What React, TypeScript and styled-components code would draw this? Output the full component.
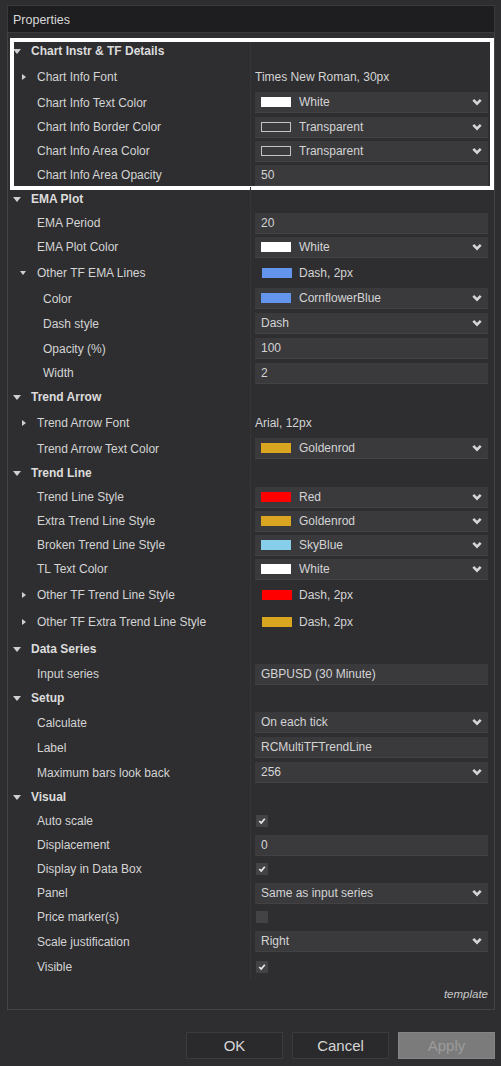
import React from 'react'
import styled, { createGlobalStyle } from 'styled-components'

const GlobalStyle = createGlobalStyle`
  html, body {
    margin: 0;
    padding: 0;
    background: #2e2e30;
  }
  body {
    font-family: "Liberation Sans", Arial, sans-serif;
    font-size: 12px;
    color: #d4d4d4;
  }
`

type Value =
  | { kind: 'text'; text: string }
  | { kind: 'line'; color: string; text: string }
  | { kind: 'input'; text: string }
  | { kind: 'select'; text: string; color?: string; outline?: boolean }
  | { kind: 'check'; checked: boolean }

interface IRow {
  label: string
  level: 1 | 2
  toggle?: 'right' | 'down'
  h: number
  value: Value
}

interface ISection {
  title: string
  h: number
  highlight?: boolean
  rows: IRow[]
}

const sections: ISection[] = [
  {
    title: 'Chart Instr & TF Details',
    h: 24,
    highlight: true,
    rows: [
      { label: 'Chart Info Font', level: 1, toggle: 'right', h: 27, value: { kind: 'text', text: 'Times New Roman, 30px' } },
      { label: 'Chart Info Text Color', level: 1, h: 25, value: { kind: 'select', text: 'White', color: '#ffffff' } },
      { label: 'Chart Info Border Color', level: 1, h: 24, value: { kind: 'select', text: 'Transparent', outline: true } },
      { label: 'Chart Info Area Color', level: 1, h: 24, value: { kind: 'select', text: 'Transparent', outline: true } },
      { label: 'Chart Info Area Opacity', level: 1, h: 24, value: { kind: 'input', text: '50' } },
    ],
  },
  {
    title: 'EMA Plot',
    h: 24,
    rows: [
      { label: 'EMA Period', level: 1, h: 24, value: { kind: 'input', text: '20' } },
      { label: 'EMA Plot Color', level: 1, h: 24, value: { kind: 'select', text: 'White', color: '#ffffff' } },
      { label: 'Other TF EMA Lines', level: 1, toggle: 'down', h: 27, value: { kind: 'line', color: '#6495ed', text: 'Dash, 2px' } },
      { label: 'Color', level: 2, h: 25, value: { kind: 'select', text: 'CornflowerBlue', color: '#6495ed' } },
      { label: 'Dash style', level: 2, h: 25, value: { kind: 'select', text: 'Dash' } },
      { label: 'Opacity (%)', level: 2, h: 25, value: { kind: 'input', text: '100' } },
      { label: 'Width', level: 2, h: 24, value: { kind: 'input', text: '2' } },
    ],
  },
  {
    title: 'Trend Arrow',
    h: 24,
    rows: [
      { label: 'Trend Arrow Font', level: 1, toggle: 'right', h: 27, value: { kind: 'text', text: 'Arial, 12px' } },
      { label: 'Trend Arrow Text Color', level: 1, h: 25, value: { kind: 'select', text: 'Goldenrod', color: '#daa520' } },
    ],
  },
  {
    title: 'Trend Line',
    h: 24,
    rows: [
      { label: 'Trend Line Style', level: 1, h: 24, value: { kind: 'select', text: 'Red', color: '#ff0000' } },
      { label: 'Extra Trend Line Style', level: 1, h: 24, value: { kind: 'select', text: 'Goldenrod', color: '#daa520' } },
      { label: 'Broken Trend Line Style', level: 1, h: 24, value: { kind: 'select', text: 'SkyBlue', color: '#87ceeb' } },
      { label: 'TL Text Color', level: 1, h: 24, value: { kind: 'select', text: 'White', color: '#ffffff' } },
      { label: 'Other TF Trend Line Style', level: 1, toggle: 'right', h: 27, value: { kind: 'line', color: '#ff0000', text: 'Dash, 2px' } },
      { label: 'Other TF Extra Trend Line Style', level: 1, toggle: 'right', h: 28, value: { kind: 'line', color: '#daa520', text: 'Dash, 2px' } },
    ],
  },
  {
    title: 'Data Series',
    h: 26,
    rows: [{ label: 'Input series', level: 1, h: 24, value: { kind: 'input', text: 'GBPUSD (30 Minute)' } }],
  },
  {
    title: 'Setup',
    h: 24,
    rows: [
      { label: 'Calculate', level: 1, h: 25, value: { kind: 'select', text: 'On each tick' } },
      { label: 'Label', level: 1, h: 25, value: { kind: 'input', text: 'RCMultiTFTrendLine' } },
      { label: 'Maximum bars look back', level: 1, h: 25, value: { kind: 'select', text: '256' } },
    ],
  },
  {
    title: 'Visual',
    h: 24,
    rows: [
      { label: 'Auto scale', level: 1, h: 24, value: { kind: 'check', checked: true } },
      { label: 'Displacement', level: 1, h: 24, value: { kind: 'input', text: '0' } },
      { label: 'Display in Data Box', level: 1, h: 24, value: { kind: 'check', checked: true } },
      { label: 'Panel', level: 1, h: 24, value: { kind: 'select', text: 'Same as input series' } },
      { label: 'Price marker(s)', level: 1, h: 24, value: { kind: 'check', checked: false } },
      { label: 'Scale justification', level: 1, h: 25, value: { kind: 'select', text: 'Right' } },
      { label: 'Visible', level: 1, h: 25, value: { kind: 'check', checked: true } },
    ],
  },
]

const Chevron = () => (
  <svg width="10" height="8" viewBox="0 0 10 8">
    <polyline points="1.3,1.8 5,5.6 8.7,1.8" fill="none" stroke="#d6d6d6" strokeWidth="2.6" />
  </svg>
)

const Tick = () => (
  <svg width="12" height="12" viewBox="0 0 12 12">
    <polyline points="3.2,6 5.2,8 8.8,3.8" fill="none" stroke="#e8e8e8" strokeWidth="1.7" />
  </svg>
)

const renderValue = (v: Value) => {
  switch (v.kind) {
    case 'text':
      return <PlainText>{v.text}</PlainText>
    case 'line':
      return (
        <LineValue>
          <Swatch col={v.color} />
          {v.text}
        </LineValue>
      )
    case 'input':
      return <Box>{v.text}</Box>
    case 'select':
      return (
        <Box>
          {(v.color || v.outline) && <Swatch col={v.color} outline={v.outline} />}
          <span>{v.text}</span>
          <Arrow>
            <Chevron />
          </Arrow>
        </Box>
      )
    case 'check':
      return <Check>{v.checked && <Tick />}</Check>
  }
}

const App: React.FC = () => {
  return (
    <Window>
      <GlobalStyle />
      <TitleBar>Properties</TitleBar>
      <Panel>
        {sections.map((s) => (
          <Section key={s.title} highlight={s.highlight}>
            <Row h={s.h}>
              <HeadCell>
                <DownTri />
                {s.title}
              </HeadCell>
              <ValueCell />
            </Row>
            {s.rows.map((r) => (
              <Row key={r.label} h={r.h}>
                <LabelCell level={r.level}>
                  {r.level === 1 && (
                    <ToggleSlot>
                      {r.toggle === 'right' && <RightTri />}
                      {r.toggle === 'down' && <SubDownTri />}
                    </ToggleSlot>
                  )}
                  {r.label}
                </LabelCell>
                <ValueCell>{renderValue(r.value)}</ValueCell>
              </Row>
            ))}
          </Section>
        ))}
        <Template>template</Template>
      </Panel>
      <Buttons>
        <Button>OK</Button>
        <Button>Cancel</Button>
        <Button disabled>Apply</Button>
      </Buttons>
    </Window>
  )
}

export default App

const Window = styled.div`
  width: 501px;
  height: 1066px;
  padding-top: 5px;
  box-sizing: border-box;
  overflow: hidden;
`
const TitleBar = styled.div`
  margin-left: 7px;
  width: 488px;
  height: 28px;
  box-sizing: border-box;
  background: #1e1e20;
  border: 1px solid #3a3a3c;
  padding: 1px 0 0 5px;
  display: flex;
  align-items: center;
  font-size: 12.5px;
  color: #d8d8d8;
`
const Panel = styled.div`
  margin-left: 7px;
  width: 488px;
  box-sizing: border-box;
  padding-top: 6px;
  border-left: 1px solid #444446;
  border-right: 1px solid #444446;
  border-bottom: 1px solid #444446;
`
const Section = styled.div<{ highlight?: boolean }>`
  position: relative;
  &::after {
    content: '';
    display: ${({ highlight }) => (highlight ? 'block' : 'none')};
    position: absolute;
    top: -1px;
    left: 2px;
    right: 0;
    bottom: -3px;
    border: 4px solid #ffffff;
    pointer-events: none;
  }
`
const Row = styled.div<{ h: number }>`
  display: grid;
  grid-template-columns: 243px 1fr;
  height: ${({ h }) => h}px;
`
const HeadCell = styled.div`
  display: flex;
  align-items: center;
  padding-left: 5px;
  font-weight: bold;
  color: #dcdcdc;
  border-right: 1px solid #363638;
`
const LabelCell = styled.div<{ level: number }>`
  display: flex;
  align-items: center;
  padding-left: ${({ level }) => (level === 1 ? 12 : 35)}px;
  white-space: nowrap;
  color: #d4d4d4;
  border-right: 1px solid #363638;
`
const ToggleSlot = styled.span`
  width: 17px;
  display: flex;
  align-items: center;
  justify-content: flex-start;
`
const DownTri = styled.span`
  width: 0;
  height: 0;
  margin-right: 10px;
  border-left: 4px solid transparent;
  border-right: 4px solid transparent;
  border-top: 5px solid #d0d0d0;
`
const SubDownTri = styled.span`
  width: 0;
  height: 0;
  border-left: 3.5px solid transparent;
  border-right: 3.5px solid transparent;
  border-top: 4px solid #d0d0d0;
`
const RightTri = styled.span`
  width: 0;
  height: 0;
  margin-left: 2px;
  border-top: 3.5px solid transparent;
  border-bottom: 3.5px solid transparent;
  border-left: 4px solid #d0d0d0;
`
const ValueCell = styled.div`
  display: flex;
  align-items: center;
  padding: 0 6px 0 4px;
`
const PlainText = styled.span`
  color: #d4d4d4;
`
const LineValue = styled.div`
  display: flex;
  align-items: center;
  gap: 7px;
  padding-left: 7px;
`
const Box = styled.div`
  flex: 1;
  height: 21px;
  display: flex;
  align-items: center;
  gap: 8px;
  padding: 0 6px;
  background: #3a3a3d;
  border-bottom: 1px solid #424245;
  box-sizing: border-box;
  color: #d4d4d4;
`
const Swatch = styled.span<{ col?: string; outline?: boolean }>`
  width: 30px;
  height: 10px;
  box-sizing: border-box;
  flex-shrink: 0;
  background: ${({ col }) => col || 'transparent'};
  border: 1px solid ${({ col, outline }) => (outline ? '#c4c4c4' : col)};
`
const Arrow = styled.span`
  margin-left: auto;
  display: flex;
  align-items: center;
`
const Check = styled.span`
  width: 12px;
  height: 12px;
  margin-left: 1px;
  background: #434346;
  display: flex;
`
const Template = styled.div`
  height: 30px;
  display: flex;
  align-items: center;
  justify-content: flex-end;
  padding-right: 6px;
  font-style: italic;
  font-size: 11.5px;
  color: #c8c8c8;
`
const Buttons = styled.div`
  display: flex;
  justify-content: flex-end;
  gap: 9px;
  width: 495px;
  margin-top: 22px;
`
const Button = styled.button`
  width: 97px;
  height: 27px;
  box-sizing: border-box;
  background: #2a2a2c;
  border: 1px solid #3b3b3d;
  color: #d6d6d6;
  font-family: "Liberation Sans", Arial, sans-serif;
  font-size: 15px;
  padding: 0;
  &:disabled {
    background: #7b7b7b;
    border-color: #858585;
    color: #9c9c9c;
  }
`
